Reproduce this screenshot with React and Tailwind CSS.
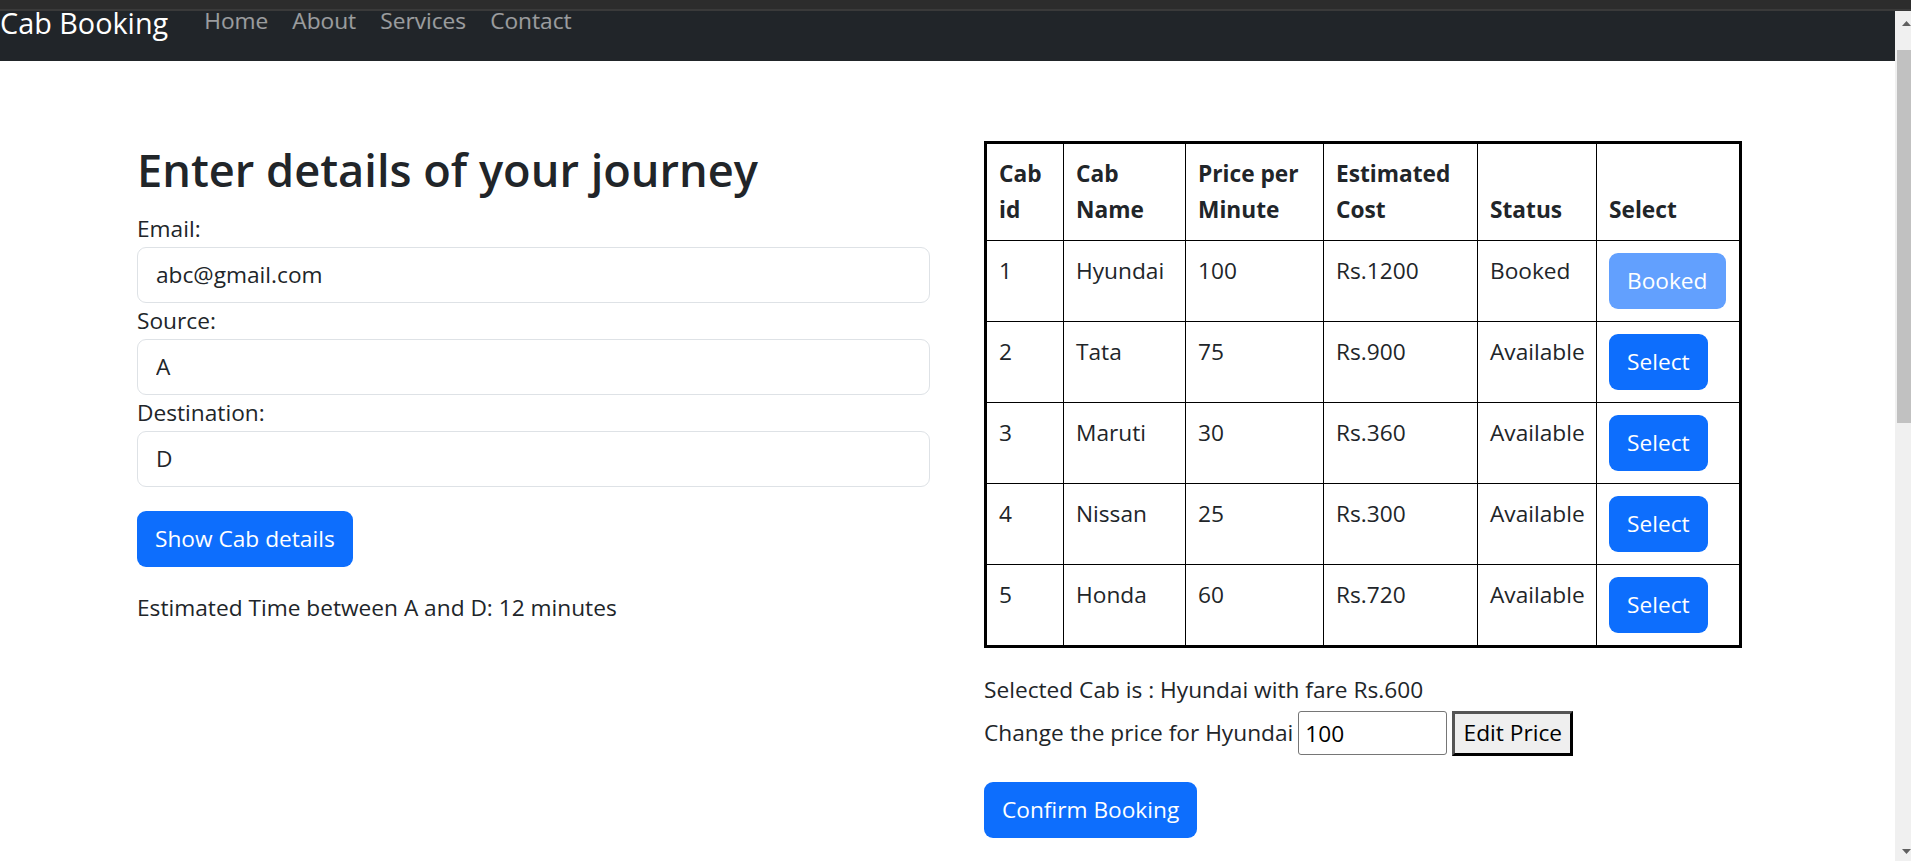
import React from "react";

const cabs = [
  { id: 1, name: "Hyundai", price: 100, cost: "Rs.1200", status: "Booked", booked: true },
  { id: 2, name: "Tata", price: 75, cost: "Rs.900", status: "Available" },
  { id: 3, name: "Maruti", price: 30, cost: "Rs.360", status: "Available" },
  { id: 4, name: "Nissan", price: 25, cost: "Rs.300", status: "Available" },
  { id: 5, name: "Honda", price: 60, cost: "Rs.720", status: "Available" },
];

function Field({ label, value }) {
  return (
    <div className="flex flex-col">
      <label className="leading-[36px]">{label}</label>
      <input
        readOnly
        value={value}
        className="h-[56px] w-full border border-[#dee2e6] rounded-[9px] px-[18px] text-[22.7px] leading-[36px] text-[#212529] bg-white outline-none"
      />
    </div>
  );
}

const th = "border border-black p-[12px] text-left align-bottom font-bold leading-[36px] whitespace-nowrap";
const td = "border border-black p-[12px] align-top leading-[36px] whitespace-nowrap";

export default function App() {
  return (
    <div className="w-[1911px] h-[861px] overflow-hidden bg-white flex flex-col font-['Open_Sans','Noto_Sans',sans-serif] text-[22.7px] text-[#212529]">
      <div className="h-[11px] bg-[#2c2c2c] border-b-2 border-[#3a3a3a] shrink-0" />
      <div className="flex flex-1 min-h-0">
        <div className="flex-1 flex flex-col min-w-0">
          <nav className="h-[50px] bg-[#212529] flex items-start shrink-0">
            <span className="text-[28.8px] leading-[23px] text-white">Cab Booking</span>
            <ul className="flex ml-[24px] text-[22.7px] leading-[20px] text-white/55">
              <li className="px-[12px]">Home</li>
              <li className="px-[12px]">About</li>
              <li className="px-[12px]">Services</li>
              <li className="px-[12px]">Contact</li>
            </ul>
          </nav>
          <main className="flex pt-[80px] pl-[137px]">
            <div className="w-[793px] flex flex-col">
              <h2 className="text-[45.2px] font-semibold leading-[57.6px] mb-[12px]">
                Enter details of your journey
              </h2>
              <Field label="Email:" value="abc@gmail.com" />
              <Field label="Source:" value="A" />
              <Field label="Destination:" value="D" />
              <div className="mt-[24px]">
                <button className="h-[56px] px-[18px] bg-[#0d6efd] text-white rounded-[9px] leading-[36px]">
                  Show Cab details
                </button>
              </div>
              <p className="mt-[23px] leading-[36px]">
                Estimated Time between A and D: 12 minutes
              </p>
            </div>
            <div className="ml-[54px] w-[757px] flex flex-col">
              <table className="table-fixed border-collapse border-[3px] border-black w-[755px]">
                <colgroup>
                  <col className="w-[78px]" />
                  <col className="w-[122px]" />
                  <col className="w-[138px]" />
                  <col className="w-[154px]" />
                  <col className="w-[119px]" />
                  <col className="w-[144px]" />
                </colgroup>
                <thead>
                  <tr>
                    <th className={th}>Cab<br />id</th>
                    <th className={th}>Cab<br />Name</th>
                    <th className={th}>Price per<br />Minute</th>
                    <th className={th}>Estimated<br />Cost</th>
                    <th className={th}>Status</th>
                    <th className={th}>Select</th>
                  </tr>
                </thead>
                <tbody>
                  {cabs.map((c) => (
                    <tr key={c.id}>
                      <td className={td}>{c.id}</td>
                      <td className={td}>{c.name}</td>
                      <td className={td}>{c.price}</td>
                      <td className={td}>{c.cost}</td>
                      <td className={td}>{c.status}</td>
                      <td className={td}>
                        {c.booked ? (
                          <button className="h-[56px] px-[18px] bg-[#62a0fe] text-white rounded-[9px] leading-[36px] block">
                            Booked
                          </button>
                        ) : (
                          <button className="h-[56px] px-[18px] bg-[#0d6efd] text-white rounded-[9px] leading-[36px] block">
                            Select
                          </button>
                        )}
                      </td>
                    </tr>
                  ))}
                </tbody>
              </table>
              <p className="mt-[24px] leading-[36px]">Selected Cab is : Hyundai with fare Rs.600</p>
              <div className="mt-[3px] h-[44px] flex items-center">
                <span className="leading-[36px]">Change the price for Hyundai</span>
                <input
                  readOnly
                  value="100"
                  className="ml-[5px] w-[149px] h-[44px] border border-[#767676] rounded-[3px] px-[6px] text-[22.7px] leading-[36px] text-black bg-white outline-none"
                />
                <button className="ml-[5px] w-[121px] h-[45px] border-[3px] border-t-[#555555] border-l-[#555555] border-r-black border-b-black bg-[#efefef] text-black leading-[36px]">
                  Edit Price
                </button>
              </div>
              <div className="mt-[27px]">
                <button className="h-[56px] px-[18px] bg-[#0d6efd] text-white rounded-[9px] leading-[36px]">
                  Confirm Booking
                </button>
              </div>
            </div>
          </main>
        </div>
        <div className="w-[16px] bg-[#f0f0f0] flex flex-col shrink-0">
          <div className="h-[39px] pt-[10px] pl-[7px]">
            <svg width="9" height="5" viewBox="0 0 9 5"><polygon points="4.5,0 9,5 0,5" fill="#606060" /></svg>
          </div>
          <div className="ml-[2px] w-[14px] h-[373px] bg-[#c1c1c1]" />
          <div className="flex-1" />
          <div className="pl-[7px] mb-[7px]">
            <svg width="9" height="5" viewBox="0 0 9 5"><polygon points="0,0 9,0 4.5,5" fill="#606060" /></svg>
          </div>
        </div>
      </div>
    </div>
  );
}
